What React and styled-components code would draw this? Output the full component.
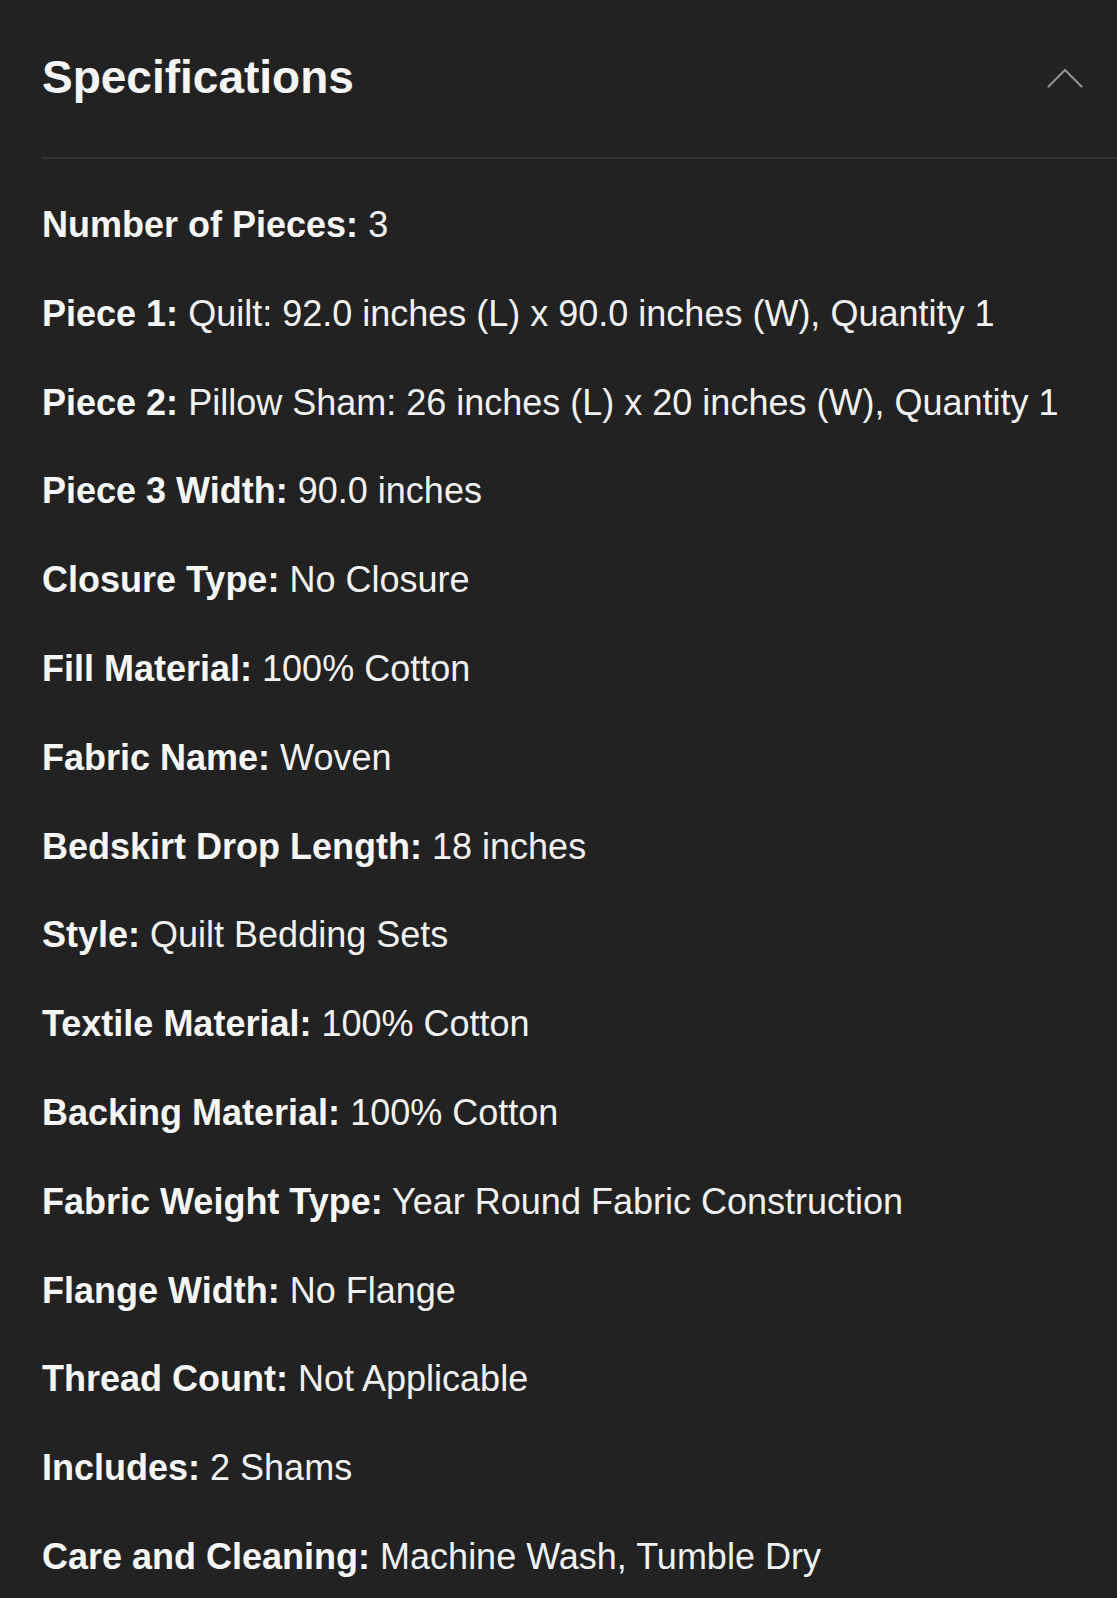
import React, {useState} from 'react'
import styled, {createGlobalStyle} from 'styled-components'

const specs = [
  {label: 'Number of Pieces', value: '3'},
  {label: 'Piece 1', value: 'Quilt: 92.0 inches (L) x 90.0 inches (W), Quantity 1'},
  {label: 'Piece 2', value: 'Pillow Sham: 26 inches (L) x 20 inches (W), Quantity 1'},
  {label: 'Piece 3 Width', value: '90.0 inches'},
  {label: 'Closure Type', value: 'No Closure'},
  {label: 'Fill Material', value: '100% Cotton'},
  {label: 'Fabric Name', value: 'Woven'},
  {label: 'Bedskirt Drop Length', value: '18 inches'},
  {label: 'Style', value: 'Quilt Bedding Sets'},
  {label: 'Textile Material', value: '100% Cotton'},
  {label: 'Backing Material', value: '100% Cotton'},
  {label: 'Fabric Weight Type', value: 'Year Round Fabric Construction'},
  {label: 'Flange Width', value: 'No Flange'},
  {label: 'Thread Count', value: 'Not Applicable'},
  {label: 'Includes', value: '2 Shams'},
  {label: 'Care and Cleaning', value: 'Machine Wash, Tumble Dry'},
]

const App = () => {
  const [isOpen, setOpen] = useState(true)

  return (
    <>
      <GlobalStyle />
      <Section>
        <Header onClick={() => setOpen(!isOpen)}>
          <Title>Specifications</Title>
          <Chevron open={isOpen} viewBox="0 0 36 20" width="36" height="20">
            <polyline
              points="1.5,18.5 18,2 34.5,18.5"
              fill="none"
              stroke="#8e8e8e"
              strokeWidth="2.2"
              strokeLinecap="round"
            />
          </Chevron>
        </Header>
        {isOpen && (
          <SpecList>
            {specs.map(spec => (
              <SpecRow key={spec.label}>
                <SpecLabel>{spec.label}:</SpecLabel> {spec.value}
              </SpecRow>
            ))}
          </SpecList>
        )}
      </Section>
    </>
  )
}

const GlobalStyle = createGlobalStyle`
  body {
    margin: 0;
    background-color: #222222;
    font-family: 'Liberation Sans', Arial, Helvetica, sans-serif;
  }
`

const Section = styled.section`
  min-height: 100vh;
  background-color: #222222;
  padding-left: 42px;
  box-sizing: border-box;
`

const Header = styled.div`
  display: flex;
  align-items: center;
  justify-content: space-between;
  padding: 52px 34px 54px 0;
  border-bottom: 2px solid #333333;
  cursor: pointer;
`

const Title = styled.h2`
  margin: 0;
  font-size: 46px;
  font-weight: 700;
  line-height: 51px;
  color: #f5f5f5;
`

const Chevron = styled.svg`
  display: block;
  transform: ${props => (props.open ? 'none' : 'rotate(180deg)')};
`

const SpecList = styled.div`
  padding-top: 22px;
`

const SpecRow = styled.p`
  margin: 0;
  font-size: 36px;
  line-height: 88.8px;
  color: #f2f2f2;
  white-space: nowrap;
`

const SpecLabel = styled.strong`
  font-weight: 700;
  color: #f7f7f7;
`

export default App
